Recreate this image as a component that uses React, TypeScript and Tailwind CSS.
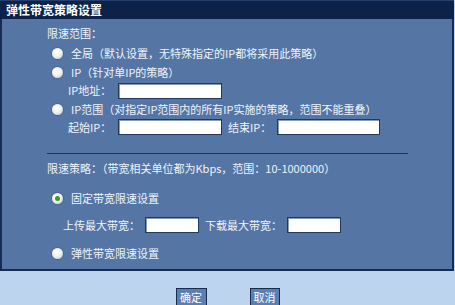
import React from "react";

const font = { fontFamily: '"Noto Sans CJK SC", "Liberation Sans", sans-serif' };

function Radio({ checked = false }: { checked?: boolean }) {
  return (
    <span className="relative inline-flex h-[11px] w-[11px] items-center justify-center rounded-full bg-[radial-gradient(circle_at_40%_35%,#ffffff_0%,#f2f2f2_45%,#b9c2cc_100%)] shadow-[0_0_0_1px_rgba(40,60,90,0.25)]">
      {checked && <span className="h-[5px] w-[5px] rounded-full bg-[#3c9a2c]" />}
    </span>
  );
}

function Input({ w }: { w: string }) {
  return (
    <span
      className={`${w} inline-block h-[16px] border border-[#22385e] bg-white shadow-[inset_1px_1px_0_#8a9bb5]`}
    />
  );
}

export default function App() {
  return (
    <div
      className="h-[305px] w-[455px] overflow-hidden bg-[#bdd4ee] text-[11px] leading-none text-[#eef3fa]"
      style={font}
    >
      <div className="w-[454px]">
        <div className="flex h-[19px] items-center border-t border-[#24406a] bg-[#0d2248] pl-[6px] text-[12px] font-bold text-white">
          弹性带宽策略设置
        </div>
        <div className="flex flex-col border-b-2 border-l-2 border-r-2 border-[#162c52] bg-[#5576a5] pb-[6px] pl-[45px] pt-[4px]">
          <div className="flex h-[20px] items-center">限速范围：</div>
          <div className="flex h-[20px] items-center">
            <span className="ml-[5px] mr-[8px] flex"><Radio /></span>
            全局（默认设置，无特殊指定的IP都将采用此策略）
          </div>
          <div className="flex h-[19px] items-center">
            <span className="ml-[5px] mr-[8px] flex"><Radio /></span>
            IP（针对单IP的策略）
          </div>
          <div className="flex h-[17px] items-center">
            <span className="ml-[21px] w-[50px]">IP地址：</span>
            <Input w="w-[104px]" />
          </div>
          <div className="flex h-[20px] items-center">
            <span className="ml-[5px] mr-[8px] flex"><Radio /></span>
            IP范围（对指定IP范围内的所有IP实施的策略，范围不能重叠）
          </div>
          <div className="flex h-[16px] items-center">
            <span className="ml-[21px] w-[50px]">起始IP：</span>
            <Input w="w-[104px]" />
            <span className="ml-[6px] w-[49px]">结束IP：</span>
            <Input w="w-[103px]" />
          </div>
          <div className="mt-[18px] h-[1px] w-[361px] bg-[#1c3360]" />
          <div className="mt-[4px] flex h-[20px] items-center">
            限速策略：（带宽相关单位都为Kbps，范围：10-1000000）
          </div>
          <div className="mt-[10px] flex h-[20px] items-center">
            <span className="ml-[5px] mr-[8px] flex"><Radio checked /></span>
            固定带宽限速设置
          </div>
          <div className="mt-[9px] flex h-[16px] items-center">
            <span className="ml-[16px] w-[82px]">上传最大带宽：</span>
            <Input w="w-[54px]" />
            <span className="ml-[6px] w-[82px]">下载最大带宽：</span>
            <Input w="w-[54px]" />
          </div>
          <div className="mt-[10px] flex h-[20px] items-center">
            <span className="ml-[5px] mr-[8px] flex"><Radio /></span>
            弹性带宽限速设置
          </div>
        </div>
      </div>
      <div className="flex justify-center gap-[43px] pt-[17px]">
        <button className="flex h-[18px] w-[31px] items-center justify-center border border-[#1a2b4b] bg-[#5a7fb2] text-[11px] text-white" style={font}>
          确定
        </button>
        <button className="flex h-[18px] w-[30px] items-center justify-center border border-[#1a2b4b] bg-[#5a7fb2] text-[11px] text-white" style={font}>
          取消
        </button>
      </div>
    </div>
  );
}
